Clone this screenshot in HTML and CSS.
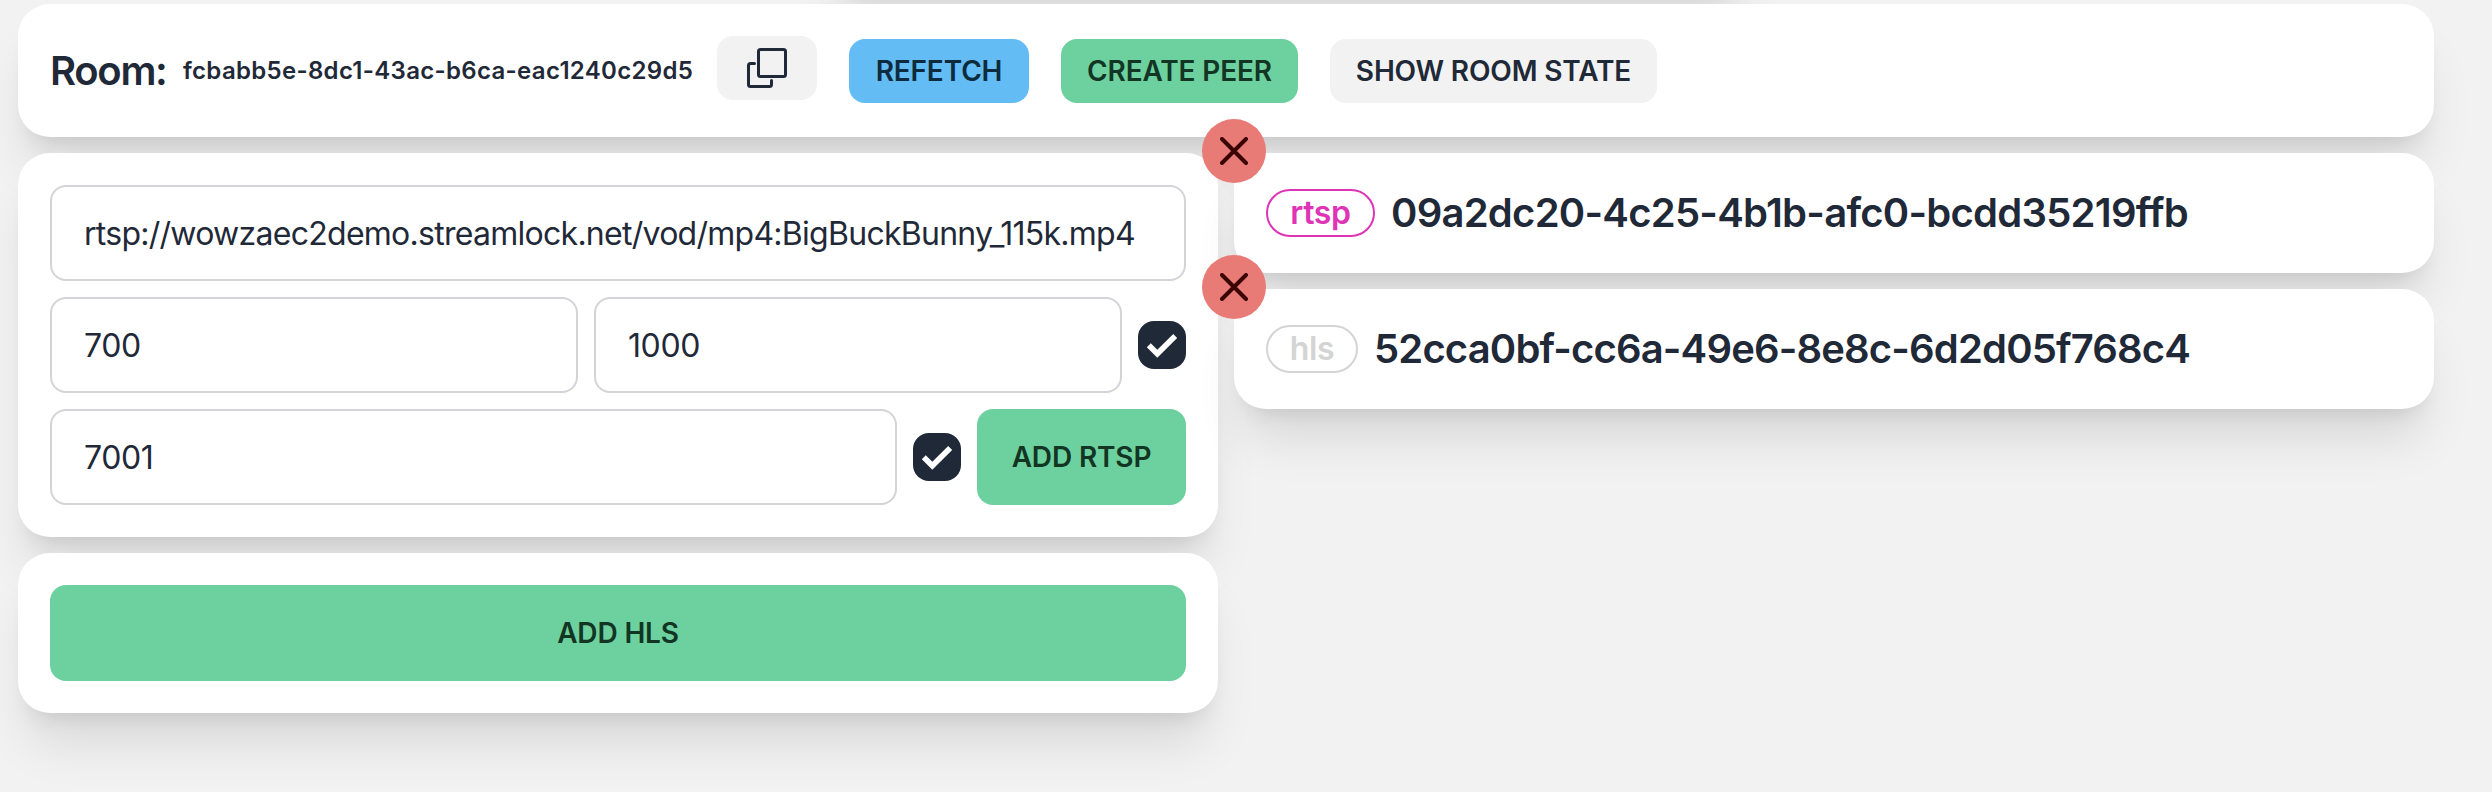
FILE: index.html
```html
<!DOCTYPE html>
<html lang="en">
<head>
<meta charset="utf-8">
<title>Room</title>
<link rel="stylesheet" href="styles.css">
</head>
<body>
<main class="page">
  <div class="card navbar"></div>
  <header class="card room">
    <h1 class="room-title">Room:</h1>
    <span class="room-id">fcbabb5e-8dc1-43ac-b6ca-eac1240c29d5</span>
    <button class="btn btn-copy" aria-label="Copy">
      <svg class="icon-copy" viewBox="0 0 40 40"><rect x="11.5" y="1.5" width="27" height="27" rx="2"/><path d="M7.5 15.500H3.500a2 2 0 0 0-2 2V36.500a2 2 0 0 0 2 2H22.500a2 2 0 0 0 2-2V32.500"/></svg>
    </button>
    <button class="btn btn-info">REFETCH</button>
    <button class="btn btn-success btn-create">CREATE PEER</button>
    <button class="btn btn-state">SHOW ROOM STATE</button>
  </header>
  <div class="columns">
    <section class="column">
      <div class="card form">
        <div class="row"><div class="input"><span class="url">rtsp://wowzaec2demo.streamlock.net/vod/mp4:BigBuckBunny_115k.mp4</span></div></div>
        <div class="row">
          <div class="input"><span class="number">700</span></div>
          <div class="input"><span class="number">1000</span></div>
          <svg class="checkbox" viewBox="0 0 48 48"><path d="M10.800 24.300 L19.300 32.800 L37.200 14.900"/></svg>
        </div>
        <div class="row">
          <div class="input"><span class="number">7001</span></div>
          <svg class="checkbox" viewBox="0 0 48 48"><path d="M10.800 24.300 L19.300 32.800 L37.200 14.900"/></svg>
          <button class="btn btn-success btn-large btn-rtsp">ADD RTSP</button>
        </div>
      </div>
      <div class="card form">
        <button class="btn btn-success btn-large">ADD HLS</button>
      </div>
    </section>
    <section class="column">
      <article class="card component">
        <button class="close" aria-label="Remove"><svg class="icon-close" viewBox="0 0 28 28"><path d="M2 2 26 26M26 2 2 26"/></svg></button>
        <span class="badge badge-rtsp">rtsp</span>
        <span class="component-id id-rtsp">09a2dc20-4c25-4b1b-afc0-bcdd35219ffb</span>
      </article>
      <article class="card component">
        <button class="close" aria-label="Remove"><svg class="icon-close" viewBox="0 0 28 28"><path d="M2 2 26 26M26 2 2 26"/></svg></button>
        <span class="badge badge-hls">hls</span>
        <span class="component-id id-hls">52cca0bf-cc6a-49e6-8e8c-6d2d05f768c4</span>
      </article>
    </section>
  </div>
</main>
</body>
</html>
```

FILE: styles.css
```css
* { box-sizing: border-box; }
body {
  margin: 0;
  height: 792px;
  overflow: hidden;
  background: #f2f2f2;
  color: #1f2937;
  font-family: Inter, "Liberation Sans", sans-serif;
}
.page {
  display: flex;
  flex-direction: column;
  gap: 16px;
  width: 2416px;
  margin-left: 18px;
}
.card {
  background: #fff;
  border-radius: 32px;
  box-shadow: 0 40px 50px -10px rgba(0, 0, 0, .1), 0 16px 20px -12px rgba(0, 0, 0, .1);
}
.navbar {
  width: 918px;
  height: 96px;
  margin-top: -108px;
  margin-left: 812px;
}
.room {
  display: flex;
  height: 133px;
  padding: 32px;
  align-items: flex-start;
}
.room-title {
  width: 133px;
  margin: 7px 0 0;
  font-size: 40px;
  line-height: 56px;
  font-weight: 600;
  letter-spacing: -1.3px;
}
.room-id {
  width: 534px;
  margin-top: 17px;
  font-size: 24px;
  line-height: 36px;
  font-weight: 600;
  letter-spacing: .31px;
  white-space: nowrap;
}
.btn {
  display: flex;
  align-items: center;
  justify-content: center;
  height: 64px;
  margin: 3px 0 0;
  padding: 0;
  border: 0;
  border-radius: 16px;
  background: #f2f2f2;
  color: #1f2937;
  font: 600 28px/28px Inter, "Liberation Sans", sans-serif;
  letter-spacing: -.15px;
  white-space: nowrap;
}
.btn-copy { width: 100px; margin-top: 0; }
.icon-copy {
  width: 40px;
  height: 40px;
  fill: none;
  stroke: #1f2937;
  stroke-width: 3;
  stroke-linecap: round;
  stroke-linejoin: round;
}
.btn-info { width: 180px; margin-left: 32px; background: #63bcf3; color: #0c2b3f; }
.btn-success { background: #6dd19f; color: #123524; }
.btn-create { width: 237px; margin-left: 32px; }
.btn-state { width: 327px; margin-left: 32px; }
.columns { display: grid; grid-template-columns: repeat(2, minmax(0, 1fr)); gap: 16px; }
.column { display: flex; flex-direction: column; gap: 16px; }
.form { display: flex; flex-direction: column; gap: 16px; padding: 32px; }
.row { display: flex; align-items: center; gap: 16px; }
.input {
  flex: 1 1 0;
  display: flex;
  align-items: center;
  height: 96px;
  padding: 0 32px;
  border: 2px solid #d2d4d7;
  border-radius: 16px;
  font-size: 32px;
  white-space: nowrap;
}
.url { letter-spacing: -.73px; }
.number { letter-spacing: -.4px; }
.checkbox {
  width: 48px;
  height: 48px;
  border-radius: 16px;
  background: #1f2937;
  fill: none;
  stroke: #fff;
  stroke-width: 5.6;
}
.btn-large { height: 96px; margin: 0; }
.btn-rtsp { width: 209px; }
.component {
  position: relative;
  display: flex;
  align-items: center;
  gap: 16px;
  height: 120px;
  padding: 0 32px;
}
.close {
  position: absolute;
  left: -32px;
  top: -34px;
  display: flex;
  align-items: center;
  justify-content: center;
  width: 64px;
  height: 64px;
  padding: 0;
  border: 0;
  border-radius: 50%;
  background: #e87b76;
}
.icon-close { width: 28px; height: 28px; stroke: #3b0403; stroke-width: 4; stroke-linecap: round; }
.badge {
  display: flex;
  align-items: center;
  justify-content: center;
  height: 48px;
  border: 2px solid;
  border-radius: 24px;
  font-size: 32px;
  line-height: 40px;
  font-weight: 600;
  letter-spacing: -.4px;
}
.badge-rtsp { width: 109px; color: #de34b5; }
.badge-hls { width: 92px; color: #d4d4d4; }
.component-id { font-size: 40px; line-height: 56px; font-weight: 600; white-space: nowrap; }
.id-rtsp { letter-spacing: -.75px; }
.id-hls { letter-spacing: -.84px; }
```
